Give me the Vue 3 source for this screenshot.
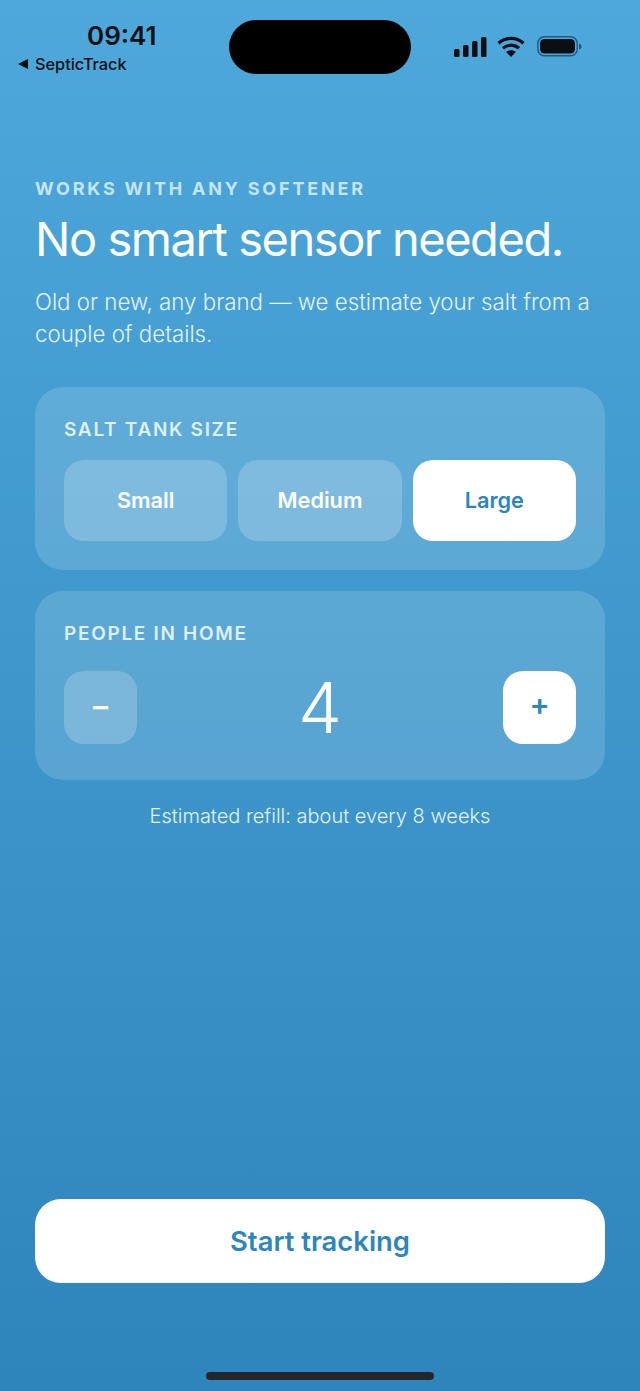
<template>
  <div class="screen">
    <!-- status bar -->
    <div class="status-bar">
      <div class="status-left">
        <span class="time">09:41</span>
        <span class="back-link"><i class="back-arrow"></i>SepticTrack</span>
      </div>
      <div class="status-right">
        <svg width="33" height="21" viewBox="0 0 33 21">
          <rect x="0" y="13" width="5.500" height="8" rx="1.500" fill="#0a0f14" />
          <rect x="9" y="9" width="5.500" height="12" rx="1.500" fill="#0a0f14" />
          <rect x="18" y="5" width="5.500" height="16" rx="1.500" fill="#0a0f14" />
          <rect x="27" y="1" width="5.500" height="20" rx="1.500" fill="#0a0f14" />
        </svg>
        <svg width="28" height="21" viewBox="0 0 28 21" fill="none" stroke="#0a0f14" stroke-width="3.200">
          <path d="M1.500 7.200C9 .8 19 .8 26.500 7.200" />
          <path d="M6 12.200C10.800 8.200 17.200 8.200 22 12.200" />
          <path d="M14 21l-5-5.200c3-2.200 7-2.200 10 0z" fill="#0a0f14" stroke="none" />
        </svg>
        <svg class="battery" width="45" height="21" viewBox="0 0 45 21">
          <rect x="0.800" y="0.800" width="39.400" height="19" rx="6.500" fill="none" stroke="#1d5a85" stroke-width="1.400" />
          <rect x="3" y="3" width="35" height="14.500" rx="4.500" fill="#0a0f14" />
          <path d="M42 7.500c1.600.4 2.500 1.500 2.500 3s-.9 2.600-2.500 3z" fill="#1d5a85" />
        </svg>
      </div>
      <div class="island"></div>
    </div>

    <div class="content">
      <div class="eyebrow">WORKS WITH ANY SOFTENER</div>
      <h1 class="title">No smart sensor needed.</h1>
      <p class="subtitle">Old or new, any brand — we estimate your salt from a couple of details.</p>

      <div class="card">
        <div class="card-label">SALT TANK SIZE</div>
        <div class="size-row">
          <button
            v-for="size in sizes"
            :key="size"
            class="size-button"
            :class="{ active: size === selectedSize }"
            @click="selectedSize = size"
          >{{ size }}</button>
        </div>
      </div>

      <div class="card people-card">
        <div class="card-label">PEOPLE IN HOME</div>
        <div class="stepper">
          <button class="step-button" @click="people = Math.max(1, people - 1)">–</button>
          <span class="people-count">{{ people }}</span>
          <button class="step-button active" @click="people++">+</button>
        </div>
      </div>

      <p class="estimate">Estimated refill: about every 8 weeks</p>
    </div>

    <div class="footer">
      <button class="start-button">Start tracking</button>
      <div class="home-bar"></div>
    </div>
  </div>
</template>

<script setup>
import { ref } from 'vue'

const sizes = ['Small', 'Medium', 'Large']
const selectedSize = ref('Large')
const people = ref(4)
</script>

<style scoped>
.screen {
  position: relative;
  width: 640px;
  height: 1391px;
  display: flex;
  flex-direction: column;
  overflow: hidden;
  background: linear-gradient(180deg, #4ea8da 0%, #2e85bc 100%);
  font-family: Inter, "Noto Sans", sans-serif;
  color: #ffffff;
}

.status-bar {
  position: relative;
  height: 90px;
  flex-shrink: 0;
}

.status-left {
  position: absolute;
  left: 18px;
  top: 21px;
  color: #0a0f14;
}

.time {
  display: block;
  margin-left: 69px;
  font-size: 26px;
  line-height: 30px;
  font-weight: 600;
}

.back-link {
  display: flex;
  align-items: center;
  gap: 7px;
  font-size: 16.300px;
  line-height: 20px;
  font-weight: 500;
  margin-top: 3px;
}

.back-arrow {
  width: 0;
  height: 0;
  border-top: 5px solid transparent;
  border-bottom: 5px solid transparent;
  border-right: 10px solid #0a0f14;
}

.status-right {
  position: absolute;
  left: 454px;
  top: 36px;
  display: flex;
  align-items: center;
  gap: 10px;
}

.battery {
  margin-left: 2px;
}

.island {
  position: absolute;
  left: 229px;
  top: 20px;
  width: 182px;
  height: 54px;
  border-radius: 27px;
  background: #000000;
}

.content {
  padding: 88px 35px 0;
  flex: 1;
}

.eyebrow {
  font-size: 18px;
  line-height: 22px;
  font-weight: 650;
  letter-spacing: 2.800px;
  color: #c5e5f7;
}

.title {
  margin: 11px 0 0;
  font-size: 47px;
  line-height: 56px;
  font-weight: 370;
  letter-spacing: -1.450px;
  white-space: nowrap;
}

.subtitle {
  margin: 19px 0 0;
  font-size: 22.300px;
  line-height: 32px;
  font-weight: 300;
  color: #e3f2fb;
}

.card {
  margin-top: 37px;
  padding: 31px 29px 29px;
  border-radius: 28px;
  background: rgba(255, 255, 255, 0.15);
}

.people-card {
  margin-top: 21px;
  padding-bottom: 36px;
}

.card-label {
  font-size: 19px;
  line-height: 24px;
  font-weight: 600;
  letter-spacing: 1.700px;
  color: #def0fa;
}

.size-row {
  display: flex;
  gap: 11px;
  margin-top: 18px;
}

.size-button {
  flex: 1;
  height: 81px;
  padding: 0 0 2px;
  border: none;
  border-radius: 20px;
  font: inherit;
  font-size: 21.700px;
  font-weight: 600;
  color: #ffffff;
  background: rgba(255, 255, 255, 0.2);
}

.size-button.active,
.step-button.active {
  background: #ffffff;
  color: #2e85bc;
}

.stepper {
  display: flex;
  align-items: center;
  justify-content: space-between;
  margin-top: 25px;
}

.step-button {
  width: 73px;
  height: 73px;
  padding: 0 0 4px;
  border: none;
  border-radius: 20px;
  font: inherit;
  font-size: 30px;
  font-weight: 600;
  color: #ffffff;
  background: rgba(255, 255, 255, 0.2);
}

.step-button.active {
  padding-bottom: 7px;
}

.people-count {
  font-size: 70px;
  line-height: 73px;
  font-weight: 300;
}

.estimate {
  margin: 23px 0 0;
  text-align: center;
  font-size: 20px;
  line-height: 26px;
  font-weight: 300;
  color: #e3f2fb;
}

.footer {
  padding: 0 35px 11px;
}

.start-button {
  display: block;
  width: 100%;
  height: 84px;
  border: none;
  border-radius: 26px;
  font: inherit;
  font-size: 27.400px;
  font-weight: 600;
  color: #2e85bc;
  background: #ffffff;
}

.home-bar {
  width: 228px;
  height: 8px;
  margin: 89px auto 0;
  border-radius: 4px;
  background: #23272c;
}
</style>

<style>
html, body {
  margin: 0;
}
</style>
